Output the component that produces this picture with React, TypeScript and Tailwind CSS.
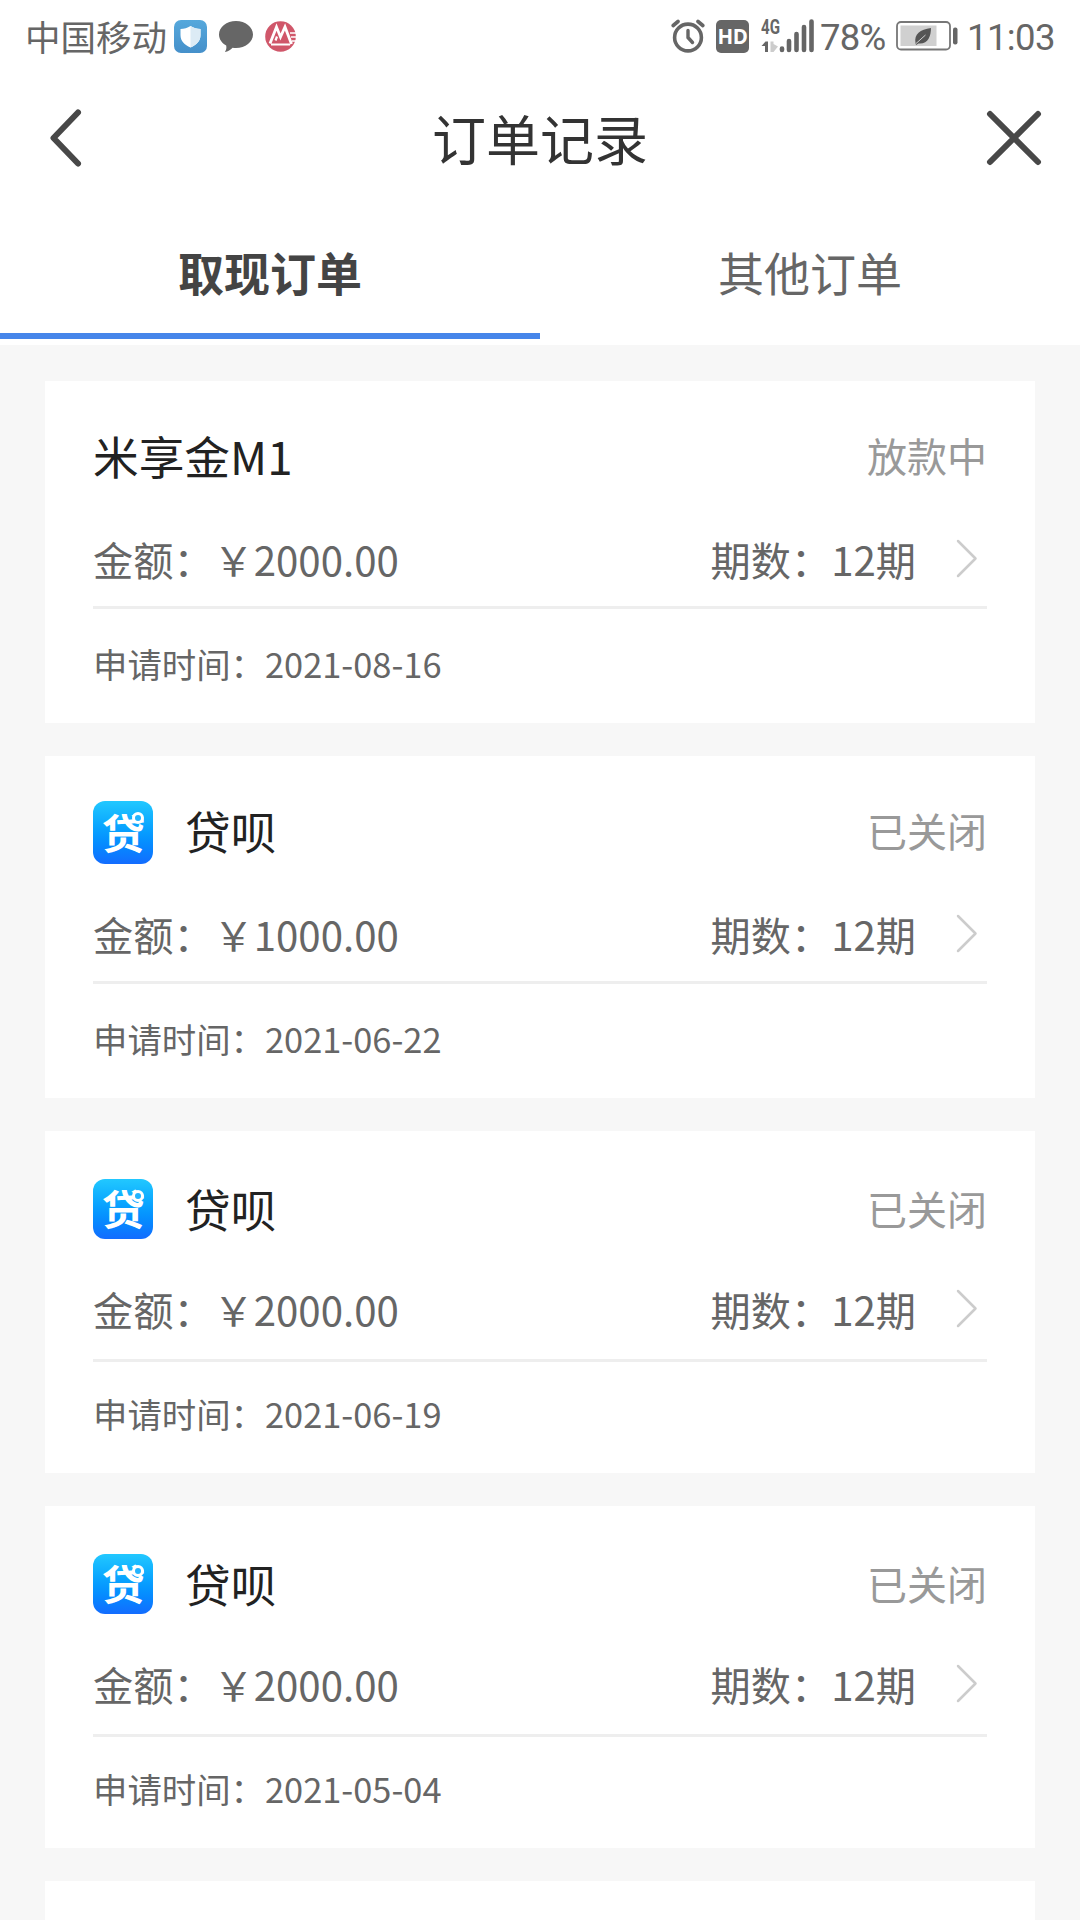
import React, { useState } from "react";
import clsx from "clsx";

type Order = {
  name: string;
  status: string;
  amount: string;
  periods: number;
  date: string;
  hasLogo?: boolean;
};

const orders: Order[] = [
  { name: "米享金M1", status: "放款中", amount: "2000.00", periods: 12, date: "2021-08-16" },
  { name: "贷呗", status: "已关闭", amount: "1000.00", periods: 12, date: "2021-06-22", hasLogo: true },
  { name: "贷呗", status: "已关闭", amount: "2000.00", periods: 12, date: "2021-06-19", hasLogo: true },
  { name: "贷呗", status: "已关闭", amount: "2000.00", periods: 12, date: "2021-05-04", hasLogo: true },
];

const tabs = ["取现订单", "其他订单"];

const ShieldIcon = () => (
  <svg width="33" height="33" viewBox="0 0 33 33">
    <defs>
      <linearGradient id="shieldBg" x1="0" y1="0" x2="0" y2="1">
        <stop offset="0" stopColor="#56a8dc" />
        <stop offset="1" stopColor="#4590ca" />
      </linearGradient>
    </defs>
    <rect width="33" height="33" rx="7" fill="url(#shieldBg)" />
    <path d="M16.5 6C19.5 8 23 8.8 26.5 9V15C26.5 21 22.5 25 16.5 27.5C10.5 25 6.5 21 6.5 15V9C10 8.8 13.5 8 16.5 6Z" fill="#fff" />
    <path d="M16.5 6C19.5 8 23 8.8 26.5 9V15C26.5 21 22.5 25 16.5 27.5Z" fill="#dcebf5" />
  </svg>
);

const ChatIcon = () => (
  <svg width="34" height="33" viewBox="0 0 34 33">
    <path d="M17 1C26.4 1 34 6.9 34 14.5S26.4 28 17 28C15.8 28 14.7 27.9 13.6 27.7C11.5 30 9 31.5 5.8 32C7.3 30.2 7.7 28 7.2 25.6C2.8 23.2 0 19.1 0 14.5C0 6.9 7.6 1 17 1Z" fill="#666" />
  </svg>
);

const BankIcon = () => (
  <svg width="31" height="31" viewBox="0 0 31 31">
    <circle cx="15.5" cy="15.5" r="15.3" fill="#d0576a" />
    <path d="M5 22.5L11.5 6L15.5 16L20 6L26.5 23" fill="none" stroke="#fff" strokeWidth="2.8" />
    <path d="M10.5 19.5L12 15.5M6 23.5H25" fill="none" stroke="#fff" strokeWidth="2.2" />
    <path d="M25 12H31M26 16H31M27 20H31" stroke="#fff" strokeWidth="1.5" />
  </svg>
);

const AlarmIcon = () => (
  <svg width="34" height="34" viewBox="0 0 34 34" fill="none" stroke="#666" strokeLinecap="round">
    <circle cx="17" cy="18.5" r="13.4" strokeWidth="3.6" />
    <path d="M17 11.5V18.5L21.5 23.5" strokeWidth="3.4" />
    <path d="M2.2 6.5L7 2.5M31.8 6.5L27 2.5" strokeWidth="3.6" />
  </svg>
);

const SignalIcon = () => (
  <div className="relative h-[34px] w-[54px]">
    <span className="absolute -top-[2px] left-0 origin-left scale-x-[0.72] text-[21px] leading-[20px] font-bold">
      4G
    </span>
    <svg className="absolute inset-0" width="54" height="34" viewBox="0 0 54 34">
      <path d="M0.5 27L4.5 22.5H7V33H4V27Z" fill="#666" />
      <path d="M9.5 22.5H12.5V25L17 27.5L12.5 33H9.5Z" fill="#ccc" />
      <path d="M21 29.5V31M28 22V31M35.5 15V31M43 8V31M50.5 2.5V31" stroke="#666" strokeWidth="4.6" strokeLinecap="round" />
    </svg>
  </div>
);

const BatteryIcon = () => (
  <svg width="62" height="30" viewBox="0 0 62 30">
    <rect x="1" y="1" width="53" height="27.5" rx="4" fill="none" stroke="#777" strokeWidth="1.8" />
    <rect x="4.5" y="4.5" width="36" height="20.5" fill="#d0d0d0" />
    <path d="M20 24L19.5 22C18 13 24 8.5 35 7C35 15 32 23.5 22.5 22.5Z" fill="#555" />
    <path d="M20 22.5L29.5 14" stroke="#d0d0d0" strokeWidth="1" />
    <rect x="57" y="6.5" width="4.5" height="17" rx="2" fill="#666" />
  </svg>
);

const StatusBar = () => (
  <div className="flex h-[72px] items-center justify-between pr-[24px] pl-[25px] text-[#666]">
    <div className="flex items-center">
      <span className="w-[143px] text-[35.5px] leading-[72px] whitespace-nowrap">中国移动</span>
      <span className="ml-[6px]"><ShieldIcon /></span>
      <span className="ml-[12px]"><ChatIcon /></span>
      <span className="ml-[12px]"><BankIcon /></span>
    </div>
    <div className="flex items-center font-[Roboto]">
      <AlarmIcon />
      <span className="ml-[11px] flex h-[33px] w-[33px] items-center justify-center rounded-[5px] bg-[#666] font-[Open_Sans] text-[20.5px] leading-none font-bold tracking-[-0.5px] text-white">
        HD
      </span>
      <span className="ml-[12px]"><SignalIcon /></span>
      <span className="ml-[5px] w-[67px] pt-[3px] text-[36.5px] leading-[69px] tracking-[-0.8px] whitespace-nowrap">78%</span>
      <span className="ml-[9px]"><BatteryIcon /></span>
      <span className="ml-[9px] w-[89px] pt-[3px] text-[36.5px] leading-[69px] tracking-[-0.6px] whitespace-nowrap">11:03</span>
    </div>
  </div>
);

const Header = () => (
  <div className="flex h-[132px] items-center justify-between pr-[36px] pl-[48px]">
    <svg width="48" height="60" viewBox="0 0 48 60" fill="none" stroke="#484848" strokeWidth="6" strokeLinecap="round" strokeLinejoin="round">
      <path d="M30 4.5L5.5 30L30 55.5" />
    </svg>
    <h1 className="text-[54px] leading-[132px] text-[#333]">订单记录</h1>
    <svg width="60" height="60" viewBox="0 0 60 60" fill="none" stroke="#484848" strokeWidth="6" strokeLinecap="round">
      <path d="M6 6L54 54M54 6L6 54" />
    </svg>
  </div>
);

const LoanLogo = () => (
  <div className="relative flex h-full w-[60px] items-center justify-center rounded-[12px] bg-linear-to-b from-[#22c8ff] to-[#136cff] text-[41px] leading-none font-bold text-white">
    <span className="mb-[3px] scale-x-[1.06]">贷</span>
    <span className="absolute top-[11px] right-[9px] h-[12px] w-[12px] rounded-full border-[3px] border-white bg-[#22b4ff]" />
  </div>
);

const OrderCard = ({ order, index }: { order: Order; index: number }) => {
  // the first two rows sit slightly tighter than the rest
  const tight = index < 2;
  return (
    <div className="h-[342px] bg-white px-[48px]">
      <div className={clsx("flex flex-col border-b-[3px] border-[#eee]", tight ? "h-[228px]" : "h-[231px]")}>
        <div className={clsx("flex items-center justify-between", tight ? "mt-[45px] h-[63px]" : "mt-[48px] h-[60px]")}>
          <div className="flex h-full items-center">
            {order.hasLogo && (
              <div className="mr-[32px] h-full">
                <LoanLogo />
              </div>
            )}
            <span className={clsx("text-[45.7px] leading-[60px] text-[#222]", tight ? "mb-[5px]" : "mb-[3px]")}>
              {order.name}
            </span>
          </div>
          <span className={clsx("text-[40px] leading-[60px] text-[#999]", tight ? "mb-[5px]" : "mb-[3px]")}>
            {order.status}
          </span>
        </div>
        <div className="mt-[39px] flex h-[60px] items-center text-[40.2px] leading-[60px] text-[#666]">
          <span className="pt-[2px]">金额：￥{order.amount}</span>
          <span className="ml-auto pt-[2px]">期数：{order.periods}期</span>
          <svg className="mr-[9px] ml-[38px]" width="24" height="42" viewBox="0 0 24 42" fill="none" stroke="#ccc" strokeWidth="2.5" strokeLinecap="round" strokeLinejoin="round">
            <path d="M4 4L21.5 21.5L4 39" />
          </svg>
        </div>
      </div>
      <div className={clsx("text-[34.4px] leading-[60px] text-[#666]", tight ? "mt-[24px]" : "mt-[21px]")}>
        申请时间：{order.date}
      </div>
    </div>
  );
};

const App = () => {
  const [selected, setSelected] = useState(0);

  return (
    <div
      lang="zh-CN"
      className="flex h-[1920px] w-[1080px] flex-col overflow-hidden bg-[#f7f7f7] font-['Noto_Sans_CJK_SC',sans-serif]"
    >
      <div className="h-[345px] shrink-0 bg-white">
        <StatusBar />
        <Header />
        <div className="grid grid-cols-2">
          {tabs.map((tab, i) => (
            <button
              key={tab}
              onClick={() => setSelected(i)}
              className={clsx(
                "h-[135px] border-b-[6px] pt-[6px] text-[46px] leading-[123px]",
                selected === i
                  ? "border-[#4686ea] font-bold text-[#444]"
                  : "border-transparent text-[#666]"
              )}
            >
              {tab}
            </button>
          ))}
        </div>
      </div>
      <div className="flex flex-col gap-[33px] px-[45px] pt-[36px]">
        {orders.map((order, i) => (
          <OrderCard key={order.date} order={order} index={i} />
        ))}
        <div className="h-[342px] bg-white" />
      </div>
    </div>
  );
};

export default App;
